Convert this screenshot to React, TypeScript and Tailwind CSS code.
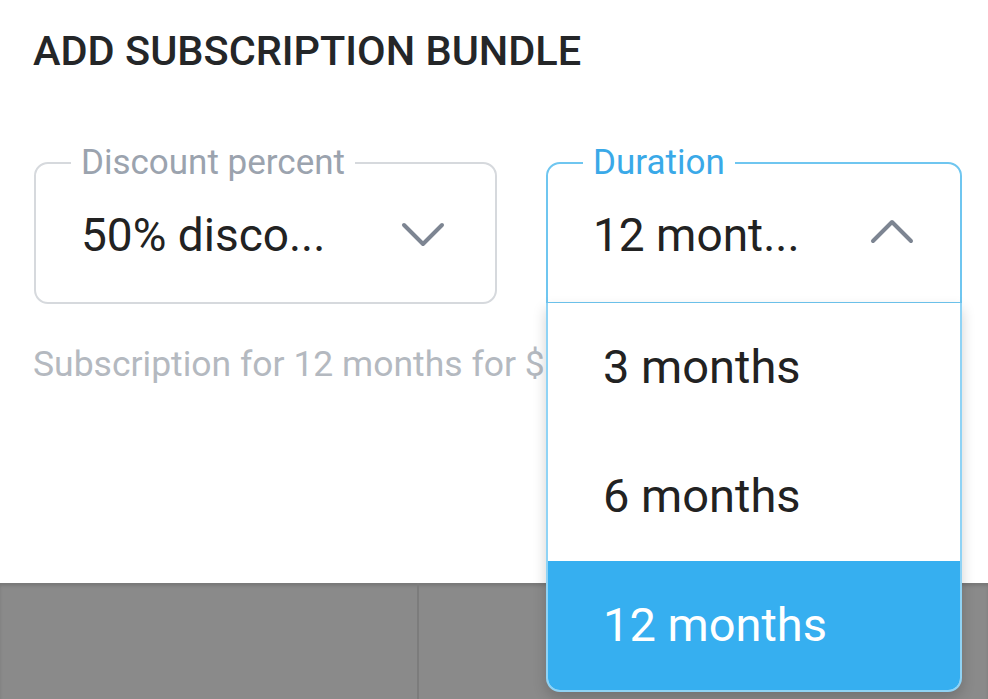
import React from "react";

const OPTIONS = ["3 months", "6 months", "12 months"];

function Chevron({ up }: { up?: boolean }) {
    return (
        <svg width="44" height="26" viewBox="0 0 44 26" fill="none" stroke="#7d8592" strokeWidth={4} strokeLinecap="round" strokeLinejoin="round">
            {up ? <path d="M3 23L22 4l19 19" /> : <path d="M3 3l19 19L41 3" />}
        </svg>
    );
}

export default function App() {
    const selected = "12 months";

    return (
        <div className="relative flex h-[699px] w-[988px] flex-col overflow-hidden bg-white font-['Roboto',sans-serif]">
            <h1 className="ml-[33px] mt-[27px] text-[41.5px] font-medium leading-[48px] text-[#242628]">
                ADD SUBSCRIPTION BUNDLE
            </h1>

            {/* Fields */}
            <div className="mt-[70px] flex">
                <fieldset className="ml-[34px] h-[159px] w-[463px] rounded-[14px] border-2 border-[#d6d9dd]">
                    <legend className="ml-[35px] px-[10px] text-[35px] leading-[36px] text-[#9ba3ae]">
                        Discount percent
                    </legend>
                    <div className="mt-[28px] flex items-center justify-between pl-[45px] pr-[50px]">
                        <span className="text-[46px] leading-[52px] text-[#222]">50% disco...</span>
                        <Chevron />
                    </div>
                </fieldset>

                <fieldset className="ml-[49px] h-[159px] w-[416px] rounded-t-[14px] border-2 border-[#6fc6f0]">
                    <legend className="ml-[35px] px-[10px] text-[35px] leading-[36px] text-[#3aa9e8]">
                        Duration
                    </legend>
                    <div className="mt-[28px] flex items-center justify-between pl-[45px] pr-[46px]">
                        <span className="text-[46px] leading-[52px] text-[#222]">12 mont...</span>
                        <div className="-mt-[8px]">
                            <Chevron up />
                        </div>
                    </div>
                </fieldset>
            </div>

            <p className="ml-[33px] mt-[40px] text-[35.5px] leading-[40px] text-[#b4b9c0]">
                Subscription for 12 months for $
            </p>

            {/* Bottom actions (dimmed) */}
            <div className="mt-auto flex h-[116px] bg-[#8a8a8a] shadow-[inset_0_3px_3px_rgba(0,0,0,0.12)]">
                <div className="w-[419px] border-r-2 border-[#7c7c7c]" />
                <div className="flex-1" />
            </div>

            {/* Duration menu */}
            <div className="absolute left-[546px] top-[303px] w-[416px] overflow-hidden rounded-b-[14px] border-2 border-t-0 border-[#8fd3f5] bg-white shadow-[0_6px_14px_rgba(0,0,0,0.18)]">
                {OPTIONS.map((opt) => (
                    <div
                        key={opt}
                        className={`flex h-[129px] items-center pl-[55px] text-[47px] ${opt === selected ? "bg-[#36aff0] text-white" : "text-[#222]"}`}
                    >
                        {opt}
                    </div>
                ))}
            </div>
        </div>
    );
}
